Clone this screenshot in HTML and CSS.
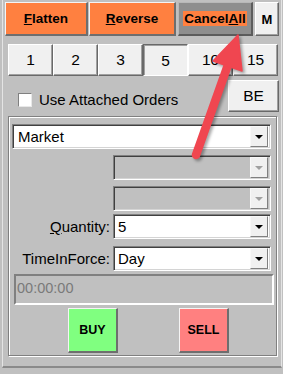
FILE: index.html
```html
<!DOCTYPE html>
<html>
<head>
<meta charset="utf-8">
<link rel="stylesheet" href="styles.css">
</head>
<body>
<div class="frame">
  <div class="toprow">
    <div class="btn orange flatten"><u>F</u>latten</div>
    <div class="btn orange reverse"><u>R</u>everse</div>
    <div class="btn cancel"><span class="hl">Cancel<u>A</u>ll</span></div>
    <div class="btn light mbtn">M</div>
  </div>
  <div class="numrow">
    <div class="btn light num">1</div>
    <div class="btn light num">2</div>
    <div class="btn light num">3</div>
    <div class="btn light num pressed">5</div>
    <div class="btn light num">10</div>
    <div class="btn light num">15</div>
  </div>
  <div class="optrow">
    <div class="check"><span class="box"></span><span class="checklabel">Use Attached Orders</span></div>
    <div class="btn light be">BE</div>
  </div>
  <div class="group">
    <div class="combo market"><span class="val">Market</span><span class="dd"><i class="tri"></i></span></div>
    <div class="frow r2"><span class="lbl"></span><div class="combo small disabled"><span class="val"></span><span class="dd"><i class="tri"></i></span></div></div>
    <div class="frow r3"><span class="lbl"></span><div class="combo small disabled"><span class="val"></span><span class="dd"><i class="tri"></i></span></div></div>
    <div class="frow r4"><span class="lbl"><u>Q</u>uantity:</span><div class="combo small"><span class="val">5</span><span class="dd"><i class="tri"></i></span></div></div>
    <div class="frow r5"><span class="lbl">TimeInForce:</span><div class="combo small"><span class="val">Day</span><span class="dd"><i class="tri"></i></span></div></div>
    <div class="timefield">00:00:00</div>
    <div class="actions">
      <div class="btn big buy">BUY</div>
      <div class="btn big sell">SELL</div>
    </div>
  </div>
</div>
<svg class="arrow" width="283" height="374" viewBox="0 0 283 374">
  <line x1="196" y1="155" x2="229" y2="62" stroke="#f04650" stroke-width="8.5" stroke-linecap="round"/>
  <polygon points="238,35 242,71 213,61" fill="#f04650" stroke="#f04650" stroke-width="1.5" stroke-linejoin="round"/>
</svg>
</body>
</html>
```
FILE: styles.css
```css
* { box-sizing: border-box; }
html, body { margin: 0; padding: 0; }
body {
  width: 283px;
  height: 374px;
  background: #c0c0c0;
  font-family: "Liberation Sans", Arial, sans-serif;
  color: #000;
  overflow: hidden;
  position: relative;
}
.frame {
  margin-left: 2px;
  width: 280px;
  height: 368px;
  border-left: 1px solid #e4e4e4;
  border-right: 1px solid #e4e4e4;
  border-bottom: 2px solid #8a8a8a;
}
.btn {
  display: flex;
  align-items: center;
  justify-content: center;
  white-space: nowrap;
}
.toprow {
  display: flex;
  padding-top: 2px;
  margin-left: 2px;
  height: 36px;
}
.orange {
  background: #ff8040;
  font-weight: bold;
  font-size: 13.5px;
  border-top: 1px solid #f4f4f4;
  border-left: 1px solid #f4f4f4;
  border-right: 2px solid #6e6e6e;
  border-bottom: 2px solid #6e6e6e;
  height: 34px;
}
.flatten { width: 83px; }
.reverse { width: 87px; margin-left: 1px; }
.cancel {
  width: 75px;
  height: 34px;
  margin-left: 2px;
  background: #8e8e8e;
  border-top: 1px solid #b8b8b8;
  border-left: 1px solid #b8b8b8;
  border-right: 2px solid #5c5c5c;
  border-bottom: 2px solid #5c5c5c;
  font-weight: bold;
  font-size: 13.5px;
}
.hl {
  background: #ff8040;
  padding: 0 1px;
  line-height: 15px;
}
.light {
  background: #f0f0f0;
  border-top: 1px solid #ffffff;
  border-left: 1px solid #ffffff;
  border-right: 1px solid #696969;
  border-bottom: 1px solid #696969;
  box-shadow: inset -1px -1px 0 #a0a0a0;
}
.mbtn {
  width: 24px;
  height: 34px;
  margin-left: 2px;
  font-weight: bold;
  font-size: 13px;
}
.numrow {
  display: flex;
  margin-top: 8px;
  margin-left: 5px;
  height: 32px;
}
.num {
  width: 45px;
  height: 32px;
  font-size: 15.5px;
}
.num.pressed {
  border-top: 1px solid #696969;
  border-left: 1px solid #696969;
  border-right: 1px solid #ffffff;
  border-bottom: 1px solid #ffffff;
  box-shadow: inset 1px 1px 0 #a0a0a0;
  padding-top: 1px;
}
.optrow {
  display: flex;
  align-items: flex-start;
  height: 36px;
}
.check {
  display: flex;
  align-items: center;
  height: 14px;
  margin-top: 17px;
  margin-left: 15px;
  gap: 7px;
}
.box {
  width: 14px;
  height: 14px;
  background: #fff;
  border-top: 1px solid #808080;
  border-left: 1px solid #808080;
  border-right: 1px solid #e8e8e8;
  border-bottom: 1px solid #e8e8e8;
}
.checklabel {
  font-size: 15px;
  line-height: 14px;
}
.be {
  margin-left: auto;
  margin-right: 2px;
  margin-top: 4px;
  width: 51px;
  height: 32px;
  font-size: 15.5px;
}
.group {
  margin-top: 4px;
  margin-left: 5px;
  width: 269px;
  height: 240px;
  border: 1px solid #808080;
  box-shadow: 1px 1px 0 #fff, inset 1px 1px 0 #fff;
  padding-top: 7px;
}
.combo {
  display: flex;
  align-items: center;
  height: 25px;
  background: #fff;
  border-top: 1px solid #808080;
  border-left: 1px solid #808080;
  border-right: 1px solid #fff;
  border-bottom: 1px solid #fff;
  box-shadow: inset 1px 1px 0 #404040, inset -1px -1px 0 #d4d4d4;
  padding: 2px 2px 2px 2px;
  font-size: 15px;
}
.combo .val { flex: 1; padding-left: 2px; line-height: 21px; }
.market { margin-left: 3px; width: 259px; }
.market .val { padding-left: 3px; }
.dd {
  width: 18px;
  height: 21px;
  background: #f0f0f0;
  border-top: 1px solid #f8f8f8;
  border-left: 1px solid #f8f8f8;
  border-right: 1px solid #808080;
  border-bottom: 1px solid #808080;
  display: flex;
  align-items: center;
  justify-content: center;
}
.tri {
  width: 0;
  height: 0;
  border-left: 4px solid transparent;
  border-right: 4px solid transparent;
  border-top: 4px solid #000;
  margin-top: 1px;
}
.disabled { background: #c0c0c0; }
.disabled .tri { border-top-color: #a0a0a0; }
.frow {
  display: flex;
  align-items: center;
  height: 25px;
}
.lbl {
  width: 104px;
  text-align: right;
  padding-right: 3px;
  font-size: 15px;
  white-space: nowrap;
}
.small { width: 158px; }
.r2 { margin-top: 6px; }
.r3 { margin-top: 6px; }
.r4 { margin-top: 3px; }
.r5 { margin-top: 7px; }
.timefield {
  margin-top: 3px;
  margin-left: 5px;
  width: 260px;
  height: 31px;
  border-top: 2px solid #808080;
  border-left: 2px solid #808080;
  border-right: 2px solid #fff;
  border-bottom: 2px solid #fff;
  color: #7a7a7a;
  font-size: 14.5px;
  padding: 4px 0 0 1px;
}
.actions {
  display: flex;
  margin-top: 3px;
}
.big {
  width: 50px;
  height: 45px;
  font-weight: bold;
  font-size: 12.5px;
  border-top: 1px solid #f4f4f4;
  border-left: 1px solid #f4f4f4;
  border-right: 2px solid #6e6e6e;
  border-bottom: 2px solid #6e6e6e;
}
.buy { background: #80ff80; margin-left: 59px; }
.sell { background: #ff8080; margin-left: 61px; }
.arrow {
  position: absolute;
  left: 0;
  top: 0;
  pointer-events: none;
  filter: drop-shadow(2px 2px 1.5px rgba(0,0,0,0.35));
}
```
